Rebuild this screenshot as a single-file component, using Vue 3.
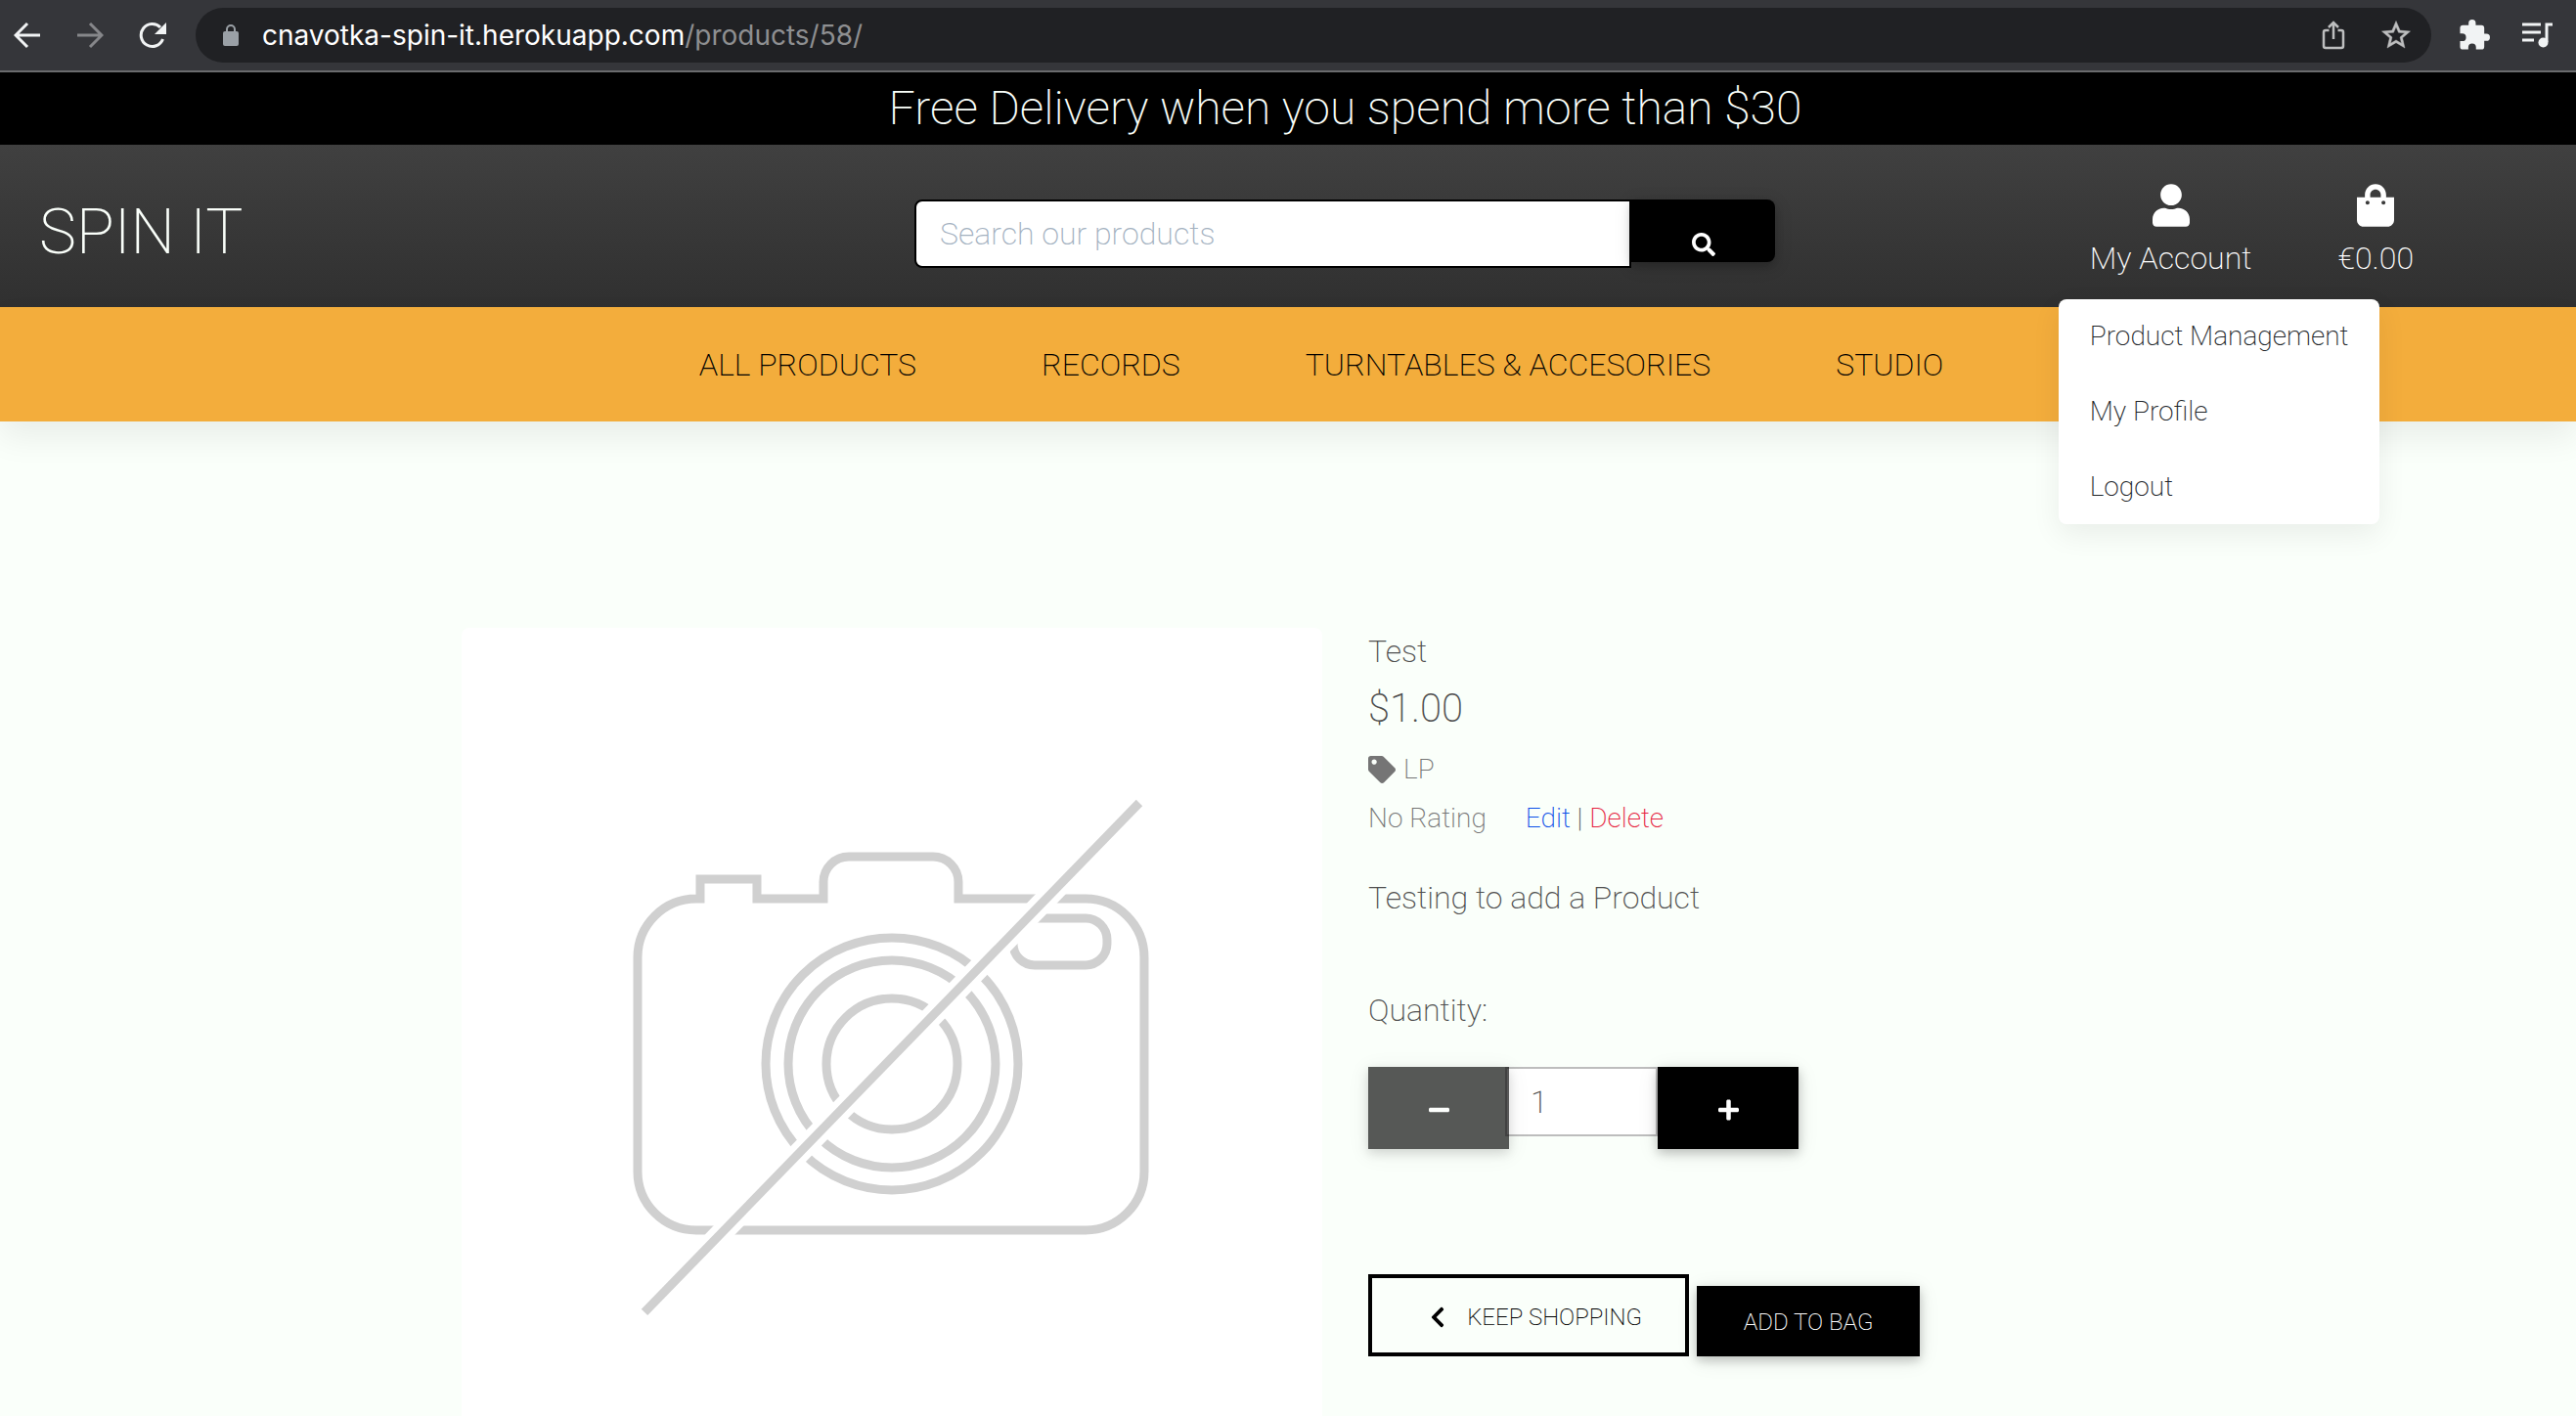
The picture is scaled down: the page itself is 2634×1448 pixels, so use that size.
<script setup>
import { ref } from 'vue'

const quantity = ref(1)
const navItems = ['ALL PRODUCTS', 'RECORDS', 'TURNTABLES & ACCESORIES', 'STUDIO']
const accountLinks = ['Product Management', 'My Profile', 'Logout']
</script>

<template>
  <div class="page">
    <div class="browser">
      <button class="tool" aria-label="Back">
        <svg width="28" height="28" viewBox="0 0 28 28" fill="none" stroke="#f1f3f4" stroke-width="3"><path d="M27 14H3M14 2 2 14l12 12" /></svg>
      </button>
      <button class="tool" aria-label="Forward">
        <svg width="28" height="28" viewBox="0 0 28 28" fill="none" stroke="#86878a" stroke-width="3"><path d="M1 14h24M14 2l12 12-12 12" /></svg>
      </button>
      <button class="tool" aria-label="Reload">
        <svg width="28" height="28" viewBox="0 0 28 28"><path d="M24.500 18A11.500 11.500 0 1 1 22 6" fill="none" stroke="#f1f3f4" stroke-width="3" /><path d="M28 1v12H16z" fill="#f1f3f4" /></svg>
      </button>
      <div class="address">
        <svg width="16" height="22" viewBox="0 0 16 22"><path d="M4 8V5a4 4 0 0 1 8 0v3" fill="none" stroke="#9aa0a6" stroke-width="2" /><rect y="7" width="16" height="15" rx="2" fill="#9aa0a6" /></svg>
        <span class="url"><span class="host">cnavotka-spin-it.herokuapp.com</span>/products/58/</span>
        <button class="tool" aria-label="Share">
          <svg width="24" height="30" viewBox="0 0 24 30" fill="none" stroke="#bdbebf" stroke-width="2.500"><path d="M7.500 10H4a2 2 0 0 0-2 2v14a2 2 0 0 0 2 2h16a2 2 0 0 0 2-2V12a2 2 0 0 0-2-2h-3.500M12 19V2M7 7l5-5 5 5" /></svg>
        </button>
        <button class="tool" aria-label="Bookmark">
          <svg width="32" height="32" viewBox="1 1 22 22" fill="#bdbebf" stroke="#bdbebf" stroke-width="0.300"><path d="m22 9.240-7.190-.62L12 2 9.190 8.630 2 9.240l5.460 4.730L5.820 21 12 17.270 18.180 21l-1.630-7.030zM12 15.400l-3.760 2.270 1-4.280-3.320-2.880 4.380-.38L12 6.100l1.710 4.040 4.380.38-3.320 2.880 1 4.280z" /></svg>
        </button>
      </div>
      <button class="tool" aria-label="Extensions">
        <svg width="32" height="32" viewBox="1 1 22 22" fill="#f1f3f4"><path d="M20.500 11H19V7a2 2 0 0 0-2-2h-4V3.500a2.500 2.500 0 0 0-5 0V5H4a2 2 0 0 0-2 2v3.800h1.500a2.700 2.700 0 0 1 0 5.400H2V20a2 2 0 0 0 2 2h3.800v-1.500a2.700 2.700 0 0 1 5.400 0V22H17a2 2 0 0 0 2-2v-4h1.500a2.500 2.500 0 0 0 0-5z" /></svg>
      </button>
      <button class="tool" aria-label="Media controls">
        <svg width="32" height="28" viewBox="0 0 32 28"><path d="M1 3h19M1 11h19M1 19h12M26 21V3H32" fill="none" stroke="#f1f3f4" stroke-width="3" /><circle cx="22.500" cy="21.500" r="5" fill="#f1f3f4" /></svg>
      </button>
    </div>

    <div class="banner">Free Delivery when you spend more than $30</div>

    <header class="header">
      <a class="logo" href="#">SPIN IT</a>
      <form class="search" @submit.prevent>
        <input type="text" placeholder="Search our products" aria-label="Search our products" />
        <button aria-label="Search">
          <svg width="24" height="24" viewBox="0 0 512 512" fill="#fff"><path d="M505 442.700 405.300 343c-4.500-4.500-10.600-7-17-7H372c27.600-35.300 44-79.700 44-128C416 93.100 322.900 0 208 0S0 93.100 0 208s93.100 208 208 208c48.300 0 92.700-16.400 128-44v16.300c0 6.400 2.500 12.500 7 17l99.700 99.700c9.400 9.400 24.600 9.400 33.900 0l28.300-28.300c9.400-9.400 9.400-24.600.1-34zM208 336c-70.700 0-128-57.200-128-128 0-70.700 57.200-128 128-128 70.700 0 128 57.200 128 128 0 70.700-57.200 128-128 128z" /></svg>
        </button>
      </form>
      <div class="user-links">
        <div class="account">
          <a class="user-link" href="#">
            <svg width="38" height="44" viewBox="0 0 448 512" fill="#fff"><path d="M224 256c70.700 0 128-57.300 128-128S294.700 0 224 0 96 57.300 96 128s57.300 128 128 128zm89.600 32h-16.700c-22.200 10.200-46.900 16-72.900 16s-50.600-5.800-72.900-16h-16.700C60.200 288 0 348.200 0 422.400V464c0 26.500 21.500 48 48 48h352c26.500 0 48-21.500 48-48v-41.600c0-74.200-60.200-134.400-134.400-134.400z" /></svg>
            My Account
          </a>
          <div class="menu">
            <a v-for="link in accountLinks" :key="link" href="#">{{ link }}</a>
          </div>
        </div>
        <a class="user-link" href="#">
          <svg width="38" height="44" viewBox="0 0 448 512" fill="#fff"><path d="M352 160v-32C352 57.420 294.579 0 224 0 153.420 0 96 57.420 96 128v32H0v272c0 44.183 35.817 80 80 80h288c44.183 0 80-35.817 80-80V160h-96zm-192-32c0-35.290 28.710-64 64-64s64 28.710 64 64v32H160v-32zm160 120c-13.255 0-24-10.745-24-24s10.745-24 24-24 24 10.745 24 24-10.745 24-24 24zm-192 0c-13.255 0-24-10.745-24-24s10.745-24 24-24 24 10.745 24 24-10.745 24-24 24z" /></svg>
          €0.00
        </a>
      </div>
    </header>

    <nav class="nav">
      <a v-for="item in navItems" :key="item" href="#">{{ item }}</a>
    </nav>

    <main class="product">
      <div class="picture">
        <svg viewBox="0 0 880 880" fill="none" stroke="#d0d0d0" stroke-width="9" role="img" aria-label="No image available">
          <path d="M240 277h4v-20h58v20h68v-17a26 26 0 0 1 26-26h86a26 26 0 0 1 26 26v17h130a60 60 0 0 1 60 60v219a60 60 0 0 1-60 60H240a60 60 0 0 1-60-60V337a60 60 0 0 1 60-60z" />
          <rect x="564" y="297" width="96" height="48" rx="22" />
          <circle cx="440" cy="446" r="129" />
          <circle cx="440" cy="446" r="106" />
          <circle cx="440" cy="446" r="67" />
          <path d="M187 700 693 179" stroke="#fff" stroke-width="22" />
          <path d="M187 700 693 179" />
        </svg>
      </div>
      <div class="info">
        <h1>Test</h1>
        <p class="price">$1.00</p>
        <p class="meta">
          <svg width="28" height="28" viewBox="0 0 512 512" fill="#757575"><path d="M0 252.118V48C0 21.490 21.490 0 48 0h204.118a48 48 0 0 1 33.941 14.059l211.882 211.882c18.745 18.745 18.745 49.137 0 67.882L293.823 497.941c-18.745 18.745-49.137 18.745-67.882 0L14.059 286.059A48 48 0 0 1 0 252.118zM112 64c-26.510 0-48 21.490-48 48s21.490 48 48 48 48-21.490 48-48-21.490-48-48-48z" /></svg>
          LP
        </p>
        <div class="meta rating">
          <span>No Rating</span>
          <span class="manage"><a class="edit" href="#">Edit</a> | <a class="delete" href="#">Delete</a></span>
        </div>
        <p class="description">Testing to add a Product</p>
        <form @submit.prevent>
          <label class="quantity-label" for="quantity">Quantity:</label>
          <div class="quantity">
            <button type="button" aria-label="Decrease quantity" :disabled="quantity <= 1" @click="quantity--">
              <svg width="21" height="24" viewBox="0 0 448 512" fill="#fff"><path d="M416 208H32c-17.670 0-32 14.330-32 32v32c0 17.670 14.330 32 32 32h384c17.670 0 32-14.330 32-32v-32c0-17.670-14.330-32-32-32z" /></svg>
            </button>
            <input id="quantity" v-model="quantity" type="number" min="1" max="99" />
            <button type="button" aria-label="Increase quantity" @click="quantity++">
              <svg width="21" height="24" viewBox="0 0 448 512" fill="#fff"><path d="M416 208H272V64c0-17.670-14.330-32-32-32h-32c-17.670 0-32 14.330-32 32v144H32c-17.670 0-32 14.330-32 32v32c0 17.670 14.330 32 32 32h144v144c0 17.670 14.330 32 32 32h32c17.670 0 32-14.330 32-32V304h144c17.670 0 32-14.330 32-32v-32c0-17.670-14.330-32-32-32z" /></svg>
            </button>
          </div>
          <div class="actions">
            <a class="keep" href="#">
              <svg width="16" height="24" viewBox="0 0 320 512" fill="#000"><path d="M34.520 239.030 228.870 44.690c9.370-9.370 24.570-9.370 33.940 0l22.670 22.670c9.360 9.360 9.370 24.520.04 33.900L131.490 256l154.020 154.750c9.340 9.380 9.320 24.540-.04 33.900l-22.670 22.670c-9.370 9.370-24.570 9.370-33.940 0L34.520 272.970c-9.370-9.370-9.370-24.570 0-33.940z" /></svg>
              KEEP SHOPPING
            </a>
            <button class="add">ADD TO BAG</button>
          </div>
        </form>
      </div>
    </main>
  </div>
</template>

<style>
html,
body {
  background: #fafffa;
}
</style>

<style scoped>
.page {
  height: 100vh;
  overflow: hidden;
  font-family: Roboto, 'Liberation Sans', sans-serif;
  font-weight: 200;
  font-size: 32px;
  line-height: 48px;
  color: #4f4f4f;
  background: #fafffa;
}
.page * {
  box-sizing: border-box;
}
svg {
  display: block;
  flex: none;
}
a {
  color: inherit;
  text-decoration: none;
}
h1,
p {
  margin: 0;
  font-size: inherit;
  font-weight: inherit;
}
button,
input {
  margin: 0;
  padding: 0;
  border: 0;
  border-radius: 0;
  font: inherit;
}

.browser {
  display: flex;
  align-items: center;
  gap: 36px;
  height: 74px;
  padding: 0 24px 0 14px;
  background: #35363a;
  border-bottom: 2px solid #6a6b6d;
}
.tool {
  background: none;
}
.browser > .tool:nth-of-type(3) {
  margin-right: -6px;
}
.address {
  flex: 1;
  display: flex;
  align-items: center;
  gap: 24px;
  height: 56px;
  padding: 0 20px 0 28px;
  margin-right: -8px;
  border-radius: 28px;
  background: #202124;
}
.address .tool + .tool {
  margin-left: 12px;
}
.url {
  flex: 1;
  font-family: Inter, 'Liberation Sans', sans-serif;
  font-size: 28px;
  font-weight: 400;
  color: #8e8f91;
}
.host {
  color: #fff;
}
.browser > .address + .tool {
  margin-right: -4px;
}

.banner {
  height: 74px;
  padding-left: 117px;
  background: #000;
  color: #fafffa;
  font-size: 48px;
  line-height: 74px;
  text-align: center;
}

.header {
  display: grid;
  grid-template-columns: 935fr 880fr 819fr;
  align-items: start;
  height: 166px;
  padding-top: 40px;
  background: linear-gradient(#404040, #303030);
  color: #fafffa;
}
.logo {
  padding-left: 40px;
  font-size: 64px;
  line-height: 100px;
}
.search {
  display: flex;
  align-items: flex-start;
  padding-top: 16px;
}
.search input {
  flex: 1;
  min-width: 0;
  height: 70px;
  padding: 0 24px;
  border: 2px solid #000;
  border-radius: 8px 0 0 8px;
  background: #fff;
  color: #4f4f4f;
}
.search input::placeholder {
  color: #a3b1bf;
  opacity: 1;
}
.search button {
  display: flex;
  justify-content: center;
  align-items: flex-end;
  width: 147px;
  height: 64px;
  padding-bottom: 6px;
  border-radius: 0 8px 8px 0;
  background: #000;
  box-shadow: 0 4px 10px rgba(0, 0, 0, 0.2), 0 4px 20px rgba(0, 0, 0, 0.1);
}
.user-links {
  display: flex;
  justify-content: flex-end;
  gap: 88px;
  padding-right: 166px;
  color: #fff;
}
.account {
  position: relative;
}
.user-link {
  display: flex;
  flex-direction: column;
  align-items: center;
  gap: 8px;
}
.menu {
  position: absolute;
  z-index: 2;
  top: 118px;
  left: -32px;
  display: flex;
  flex-direction: column;
  gap: 2px;
  padding: 0 32px 1px;
  border-radius: 8px;
  background: #fff;
  color: #212529;
  font-size: 28px;
  white-space: nowrap;
  box-shadow: 0 10px 30px rgba(0, 0, 0, 0.07);
}
.menu a {
  line-height: 75px;
}

.nav {
  display: flex;
  justify-content: center;
  gap: 128px;
  height: 117px;
  padding-left: 68px;
  background: #f3ad3c;
  color: #000;
  line-height: 119px;
  box-shadow: 0 16px 32px rgba(0, 0, 0, 0.07);
}

.product {
  display: grid;
  grid-template-columns: 880fr 1282fr;
  padding: 211px 0 0 calc(18% - 2px);
}
.picture {
  overflow: hidden;
  border-radius: 8px;
  background: #fff;
}
.info {
  padding-left: 47px;
}
.price {
  margin: 11px 0 13px;
  font-size: 40px;
}
.meta {
  display: flex;
  align-items: center;
  gap: 8px;
  font-size: 28px;
  line-height: 50px;
  color: #757575;
}
.rating {
  gap: 40px;
}
.manage {
  color: #4f4f4f;
}
.edit {
  color: #0d50e8;
}
.delete {
  color: #e6233f;
}
.description {
  margin-top: 32px;
}
.quantity-label {
  display: block;
  margin-top: 67px;
}
.quantity {
  display: flex;
  align-items: flex-start;
  margin-top: 34px;
}
.quantity button {
  position: relative;
  display: flex;
  justify-content: center;
  align-items: center;
  width: 144px;
  height: 84px;
  padding-top: 4px;
  background: #000;
  box-shadow: 0 4px 10px rgba(0, 0, 0, 0.2), 0 4px 20px rgba(0, 0, 0, 0.1);
}
.quantity button:disabled {
  opacity: 0.65;
}
.quantity input {
  width: 156px;
  height: 71px;
  margin-left: -4px;
  padding: 0 24px;
  border: 2px solid #bdbdbd;
  background: #fff;
  color: #4f4f4f;
  appearance: textfield;
}
.actions {
  display: flex;
  align-items: flex-end;
  gap: 8px;
  margin-top: 128px;
  font-size: 24px;
  color: #000;
}
.keep {
  display: flex;
  align-items: center;
  justify-content: flex-end;
  gap: 22px;
  width: 328px;
  height: 84px;
  padding: 4px 44px 0 0;
  border: 4px solid #000;
}
.add {
  width: 228px;
  height: 72px;
  padding-top: 2px;
  background: #000;
  color: #fff;
  box-shadow: 0 4px 10px rgba(0, 0, 0, 0.2), 0 4px 20px rgba(0, 0, 0, 0.1);
}
</style>
